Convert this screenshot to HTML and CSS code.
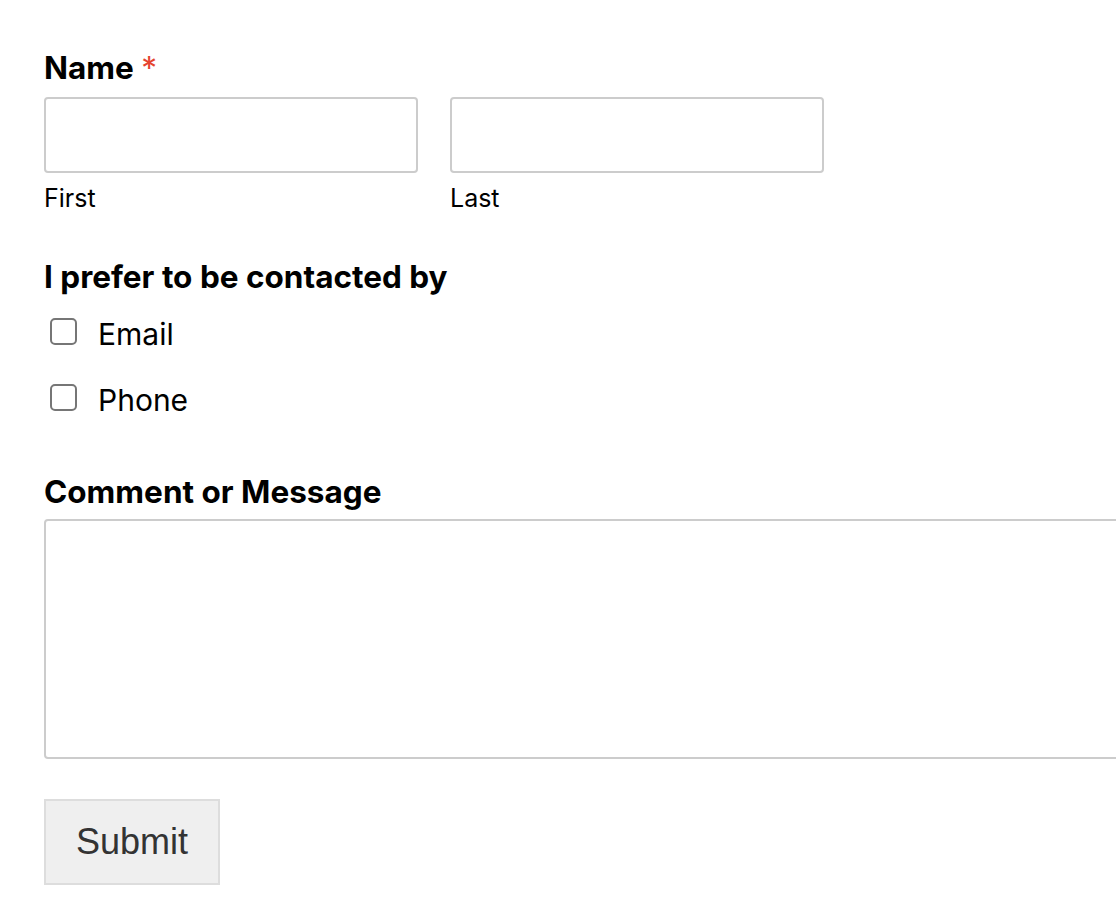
FILE: index.html
```html
<!DOCTYPE html>
<html lang="en">
<head>
<meta charset="utf-8">
<title>Contact form</title>
<link rel="stylesheet" href="styles.css">
</head>
<body>
<form class="form">
  <div class="field">
    <div class="field-label">Name <span class="req">*</span></div>
    <div class="name-row">
      <div class="name-col">
        <input class="text-input" type="text">
        <div class="sublabel">First</div>
      </div>
      <div class="name-col">
        <input class="text-input" type="text">
        <div class="sublabel">Last</div>
      </div>
    </div>
  </div>

  <div class="field field-contact">
    <div class="field-label">I prefer to be contacted by</div>
    <ul class="choices">
      <li class="choice"><input class="check" type="checkbox"><span class="choice-text">Email</span></li>
      <li class="choice"><input class="check" type="checkbox"><span class="choice-text">Phone</span></li>
    </ul>
  </div>

  <div class="field field-message">
    <div class="field-label">Comment or Message</div>
    <textarea class="textarea"></textarea>
  </div>

  <button class="submit" type="button">Submit</button>
</form>
</body>
</html>
```

FILE: styles.css
```css
html, body {
  margin: 0;
  padding: 0;
  background: #fff;
  overflow: hidden;
}

body {
  font-family: Inter, "Noto Sans", sans-serif;
  color: #000;
}

.form {
  padding: 49px 0 0 44px;
  display: flex;
  flex-direction: column;
}

.field-label {
  font-size: 31.5px;
  font-weight: 700;
  line-height: 38px;
}

.req {
  color: #e5432f;
  font-weight: 400;
}

.name-row {
  display: flex;
  gap: 32px;
  margin-top: 10px;
}

.name-col {
  display: flex;
  flex-direction: column;
}

.text-input {
  box-sizing: border-box;
  width: 374px;
  height: 76px;
  margin: 0;
  border: 2px solid #cccccc;
  border-radius: 4px;
  background: #fff;
}

.sublabel {
  font-size: 25px;
  line-height: 28px;
  margin-top: 11px;
}

.field-contact {
  margin-top: 46px;
}

.choices {
  list-style: none;
  margin: 17px 0 0;
  padding: 0;
  display: flex;
  flex-direction: column;
  gap: 30px;
}

.choice {
  display: flex;
  align-items: center;
  height: 36px;
}

.check {
  appearance: none;
  -webkit-appearance: none;
  box-sizing: border-box;
  width: 27px;
  height: 27px;
  margin: 0 0 0 6px;
  border: 2px solid #767676;
  border-radius: 5px;
  background: #fff;
}

.choice-text {
  font-size: 30px;
  margin-left: 21px;
  line-height: 36px;
  padding-top: 6px;
}

.field-message {
  margin-top: 58px;
}

.textarea {
  box-sizing: border-box;
  display: block;
  width: 1100px;
  height: 240px;
  margin-top: 8px;
  border: 2px solid #cccccc;
  border-radius: 4px;
  resize: none;
  background: #fff;
}

.submit {
  align-self: flex-start;
  box-sizing: border-box;
  width: 176px;
  height: 86px;
  margin-top: 40px;
  border: 2px solid #dddddd;
  background: #efefef;
  color: #333;
  font-family: "Liberation Sans", Arial, sans-serif;
  font-size: 36px;
  padding: 0;
}
```
